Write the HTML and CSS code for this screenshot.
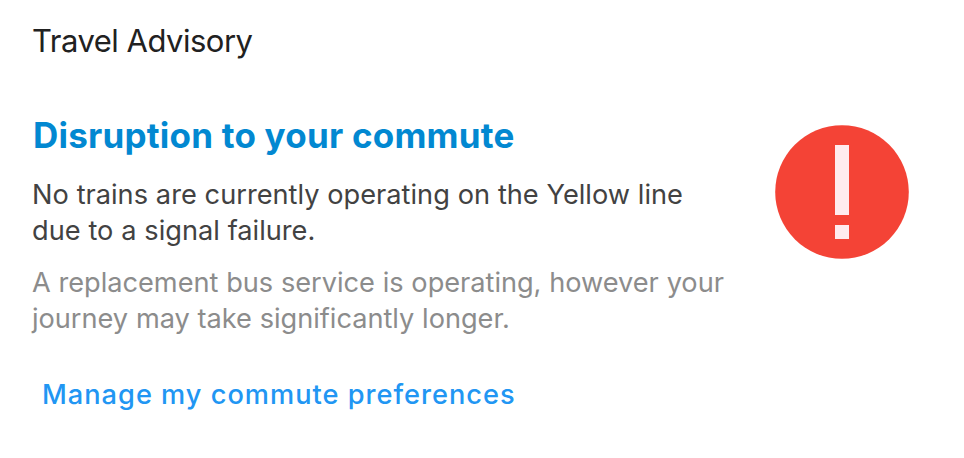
FILE: index.html
```html
<!DOCTYPE html>
<html lang="en">
<head>
<meta charset="utf-8">
<title>Travel Advisory</title>
<link rel="stylesheet" href="styles.css">
</head>
<body>
<main class="card">
  <h1 class="heading">Travel Advisory</h1>
  <section class="advisory">
    <div class="details">
      <h2 class="title">Disruption to your commute</h2>
      <p class="summary">No trains are currently operating on the Yellow line<br>due to a signal failure.</p>
      <p class="note">A replacement bus service is operating, however your<br>journey may take significantly longer.</p>
    </div>
    <svg class="alert" viewBox="0 0 134 134" aria-hidden="true">
      <circle cx="67" cy="67" r="66.800" fill="#f44336"/>
      <path d="M60 20h14v70H60zM60 100h14v14H60z" fill="#ffebee"/>
    </svg>
  </section>
  <a class="manage">Manage my commute preferences</a>
</main>
</body>
</html>
```
FILE: styles.css
```css
* { box-sizing: border-box; margin: 0; }
body { background: #fff; font-family: Inter, sans-serif; }
.card { height: 458px; padding: 21px 55px 0 32px; }
.heading { font-size: 31px; line-height: 40px; font-weight: 400; letter-spacing: -0.5px; color: #212121; white-space: nowrap; }
.advisory { display: flex; justify-content: space-between; margin-top: 54px; }
.details { white-space: nowrap; }
.title { padding-left: 1px; font-size: 35px; line-height: 40px; font-weight: 700; letter-spacing: 0.22px; color: #0288d1; }
.summary { margin-top: 22px; font-size: 27.2px; line-height: 36px; word-spacing: 0.2px; color: #424242; }
.note { margin-top: 16px; font-size: 27.2px; line-height: 36px; letter-spacing: -0.03px; word-spacing: 0.2px; color: #8c8c8c; }
.alert { width: 134px; height: 134px; margin-top: 10px; flex: none; }
.manage { display: inline-block; margin: 40px 0 0 10px; font-size: 27.2px; line-height: 36px; font-weight: 500; letter-spacing: 1px; color: #2196f3; white-space: nowrap; }
```
